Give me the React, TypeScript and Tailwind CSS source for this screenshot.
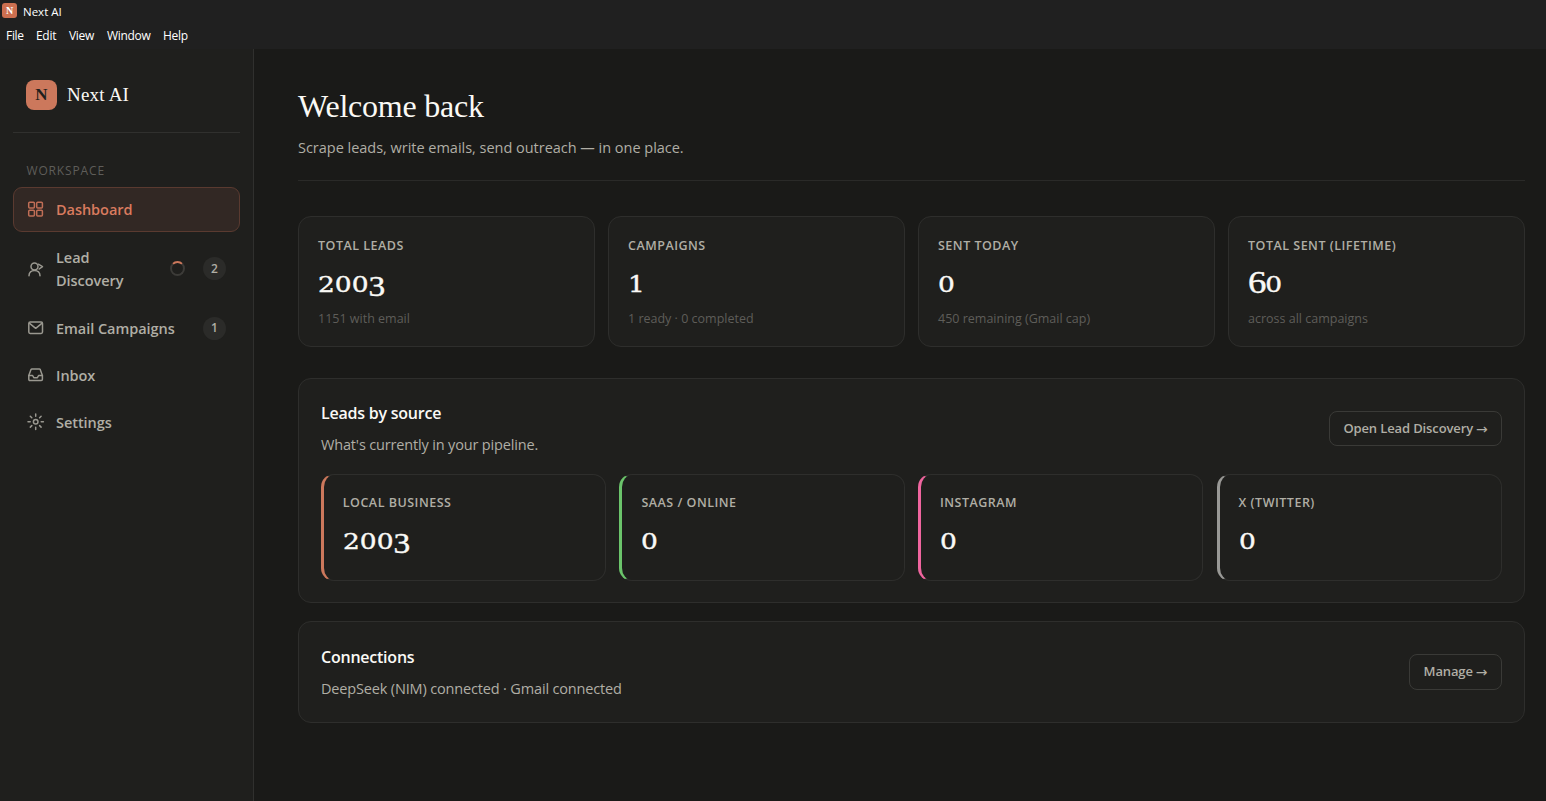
import React from 'react';

const SERIF = "font-['Liberation_Serif',serif]";

const menuItems = [
  { label: 'File', className: 'w-[30px]' },
  { label: 'Edit', className: 'w-[33px]' },
  { label: 'View', className: 'w-[38px]' },
  { label: 'Window', className: 'w-[56px]' },
  { label: 'Help', className: 'w-[30px]' },
];

const stats = [
  { label: 'TOTAL LEADS', value: '2003', hint: '1151 with email' },
  { label: 'CAMPAIGNS', value: '1', hint: '1 ready · 0 completed' },
  { label: 'SENT TODAY', value: '0', hint: '450 remaining (Gmail cap)' },
  { label: 'TOTAL SENT (LIFETIME)', value: '60', hint: 'across all campaigns' },
];

const sources = [
  { label: 'LOCAL BUSINESS', value: '2003', accent: 'border-l-[#cc785c]' },
  { label: 'SAAS / ONLINE', value: '0', accent: 'border-l-[#6bc46b]' },
  { label: 'INSTAGRAM', value: '0', accent: 'border-l-[#f0659f]' },
  { label: 'X (TWITTER)', value: '0', accent: 'border-l-[#999996]' },
];

function Icon({ children }: { children: React.ReactNode }) {
  return (
    <svg
      className="h-[18px] w-[18px] shrink-0 opacity-85"
      viewBox="0 0 18 18"
      fill="none"
      stroke="currentColor"
      strokeWidth="1.5"
      strokeLinecap="round"
      strokeLinejoin="round"
    >
      {children}
    </svg>
  );
}

function DashboardIcon() {
  return (
    <Icon>
      <rect x="1.7" y="1.2" width="5.7" height="5.7" rx="1" />
      <rect x="9.7" y="1.2" width="5.7" height="5.7" rx="1" />
      <rect x="1.7" y="9.2" width="5.7" height="5.7" rx="1" />
      <rect x="9.7" y="9.2" width="5.7" height="5.7" rx="1" />
    </Icon>
  );
}

function LeadIcon() {
  return (
    <Icon>
      <circle cx="7.5" cy="6.5" r="3.5" />
      <path d="M2 15.8c0-3.2 2.3-5.4 5.5-5.4s5.5 2.2 5.5 5.4" />
      <path d="M11.4 4.2l4.1 2.4-3.3 2.4" />
    </Icon>
  );
}

function MailIcon() {
  return (
    <Icon>
      <rect x="1.8" y="3" width="13.7" height="11.4" rx="1.4" />
      <path d="M2.6 4.4l6.1 4.9 6.1-4.9" />
    </Icon>
  );
}

function InboxIcon() {
  return (
    <Icon>
      <path d="M1.8 9.5L4 3.6c.2-.5.5-.7 1-.7h7.2c.5 0 .9.2 1 .7l2.2 5.9v3.8c0 .7-.4 1.1-1.1 1.1H2.9c-.7 0-1.1-.4-1.1-1.1z" />
      <path d="M1.8 9.5h3.8l1.2 2.2h3.6l1.2-2.2h3.8" />
    </Icon>
  );
}

function SettingsIcon() {
  return (
    <Icon>
      <circle cx="8.7" cy="8.7" r="2.3" />
      <path d="M8.7 1v2.2M8.7 14.2v2.2M1 8.7h2.2M14.2 8.7h2.2M3.3 3.3l1.5 1.5M12.6 12.6l1.5 1.5M3.3 14.1l1.5-1.5M12.6 4.8l1.5-1.5" />
    </Icon>
  );
}

function NavItem({
  icon,
  children,
  active,
  spinning,
  count,
  className = 'h-[45px]',
}: {
  icon: React.ReactNode;
  children: React.ReactNode;
  active?: boolean;
  spinning?: boolean;
  count?: number;
  className?: string;
}) {
  const tone = active
    ? 'border-[#5a3a30] bg-[#322824] text-[#d97b5f]'
    : 'border-transparent text-[#b0aea5]';
  return (
    <a className={`flex shrink-0 items-center rounded-[9px] border px-[13px] ${tone} ${className}`}>
      {icon}
      <span className="ml-[11px] flex-1 text-[14.5px] leading-[23px] font-semibold tracking-[-0.05px]">
        {children}
      </span>
      {spinning && (
        <span className="mr-[18px] h-[15px] w-[15px] rounded-full border-2 border-[#3c3b38] border-t-[#cc785c]" />
      )}
      {count !== undefined && (
        <span className="flex h-[23px] w-[23px] items-center justify-center rounded-full bg-[#2b2b29] text-xs font-semibold text-[#b0aea5]">
          {count}
        </span>
      )}
    </a>
  );
}

// Old-style figures: 0-2 sit at x-height, 6 and 8 ascend, the others descend
function digitClass(digit: string) {
  if ('68'.includes(digit)) {
    return "relative top-px font-['Liberation_Serif',serif] text-[32px] tracking-[-1px]";
  }
  if ('34579'.includes(digit)) {
    return "relative top-[4px] font-['Liberation_Serif',serif] text-[29px]";
  }
  return '';
}

function Figure({ value }: { value: string }) {
  return (
    <div className="h-[34px] origin-left scale-x-[1.15] font-['DejaVu_Serif',serif] text-[23px] leading-[34px] whitespace-nowrap text-[#faf9f5] [-webkit-text-stroke:0.4px_#faf9f5]">
      {value.split('').map((digit, i) => (
        <span key={i} className={`leading-[0] ${digitClass(digit)}`}>{digit}</span>
      ))}
    </div>
  );
}

function Label({ children }: { children: React.ReactNode }) {
  return (
    <div className="text-[12.5px] leading-[18px] font-semibold tracking-[0.5px] whitespace-nowrap text-[#b0aea5]">
      {children}
    </div>
  );
}

function PanelHeader({ title, text, action }: { title: string; text: string; action: React.ReactNode }) {
  return (
    <div className="flex items-center justify-between">
      <div>
        <h2 className="text-[16px] leading-[26px] font-semibold tracking-[-0.23px] text-[#faf9f5]">{title}</h2>
        <p className="mt-[7px] text-[14.5px] leading-[24px] tracking-[-0.16px] text-[#b0aea5]">{text}</p>
      </div>
      {action}
    </div>
  );
}

function OutlineButton({ children, className }: { children: React.ReactNode; className: string }) {
  return (
    <button
      className={`flex items-center justify-center gap-[3px] rounded-[8px] border border-[#3a3a37] pt-[1px] text-[13px] font-semibold tracking-[-0.12px] whitespace-nowrap text-[#b0aea5] ${className}`}
    >
      {children}
      <span className="font-['DejaVu_Sans',sans-serif] text-[14px] leading-[16px] font-normal">→</span>
    </button>
  );
}

function Sidebar() {
  return (
    <aside className="flex w-[254px] shrink-0 flex-col border-r border-[#30302e] bg-[#1f1f1d] px-[13px]">
      <div className="flex h-[84px] shrink-0 items-center border-b border-[#30302e] pt-[8px] pl-[13px]">
        <div className={`${SERIF} flex h-[30px] w-[31px] items-center justify-center rounded-[8px] bg-[#cc785c] text-[17px] font-bold text-[#1f1f1d]`}>
          N
        </div>
        <span className={`${SERIF} ml-[10px] pt-[2px] text-[19px] tracking-[0.2px] text-[#faf9f5]`}>Next AI</span>
      </div>
      <div className="mt-[29px] mb-[7px] pl-[13.5px] text-xs leading-[18px] tracking-[0.85px] text-[#5e5d59]">
        WORKSPACE
      </div>
      <nav className="flex flex-col gap-[2px]">
        <NavItem icon={<DashboardIcon />} active>Dashboard</NavItem>
        <NavItem icon={<LeadIcon />} spinning count={2} className="h-[69.6px]">
          Lead
          <br />
          Discovery
        </NavItem>
        <NavItem icon={<MailIcon />} count={1}>Email Campaigns</NavItem>
        <NavItem icon={<InboxIcon />}>Inbox</NavItem>
        <NavItem icon={<SettingsIcon />}>Settings</NavItem>
      </nav>
    </aside>
  );
}

export default function App() {
  return (
    <div className="flex h-[801px] w-[1546px] flex-col overflow-hidden bg-[#1a1a18] font-['Open_Sans',sans-serif]">
      {/* Window chrome */}
      <header className="h-[49px] shrink-0 bg-[#202020] text-white">
        <div className="flex h-[24px] items-center">
          <div className={`${SERIF} mb-[3px] ml-[2px] flex h-[15px] w-[15px] items-center justify-center rounded-[3px] bg-[#cc6f50] text-[10px] font-bold`}>
            N
          </div>
          <span className="ml-[6px] text-[11.5px]">Next AI</span>
        </div>
        <div className="flex h-[24px] items-center pl-[6px] text-[12px] tracking-[-0.3px]">
          {menuItems.map((item) => (
            <span key={item.label} className={item.className}>{item.label}</span>
          ))}
        </div>
      </header>

      <div className="flex min-h-0 flex-1">
        <Sidebar />

        <main className="min-w-0 flex-1 pr-[21px] pl-[44px]">
          <div className="h-[132px] border-b border-[#2a2a28] pt-[37px]">
            <h1 className={`${SERIF} text-[32px] leading-[40px] tracking-[-0.22px] text-[#faf9f5]`}>Welcome back</h1>
            <p className="mt-[10px] text-[14.5px] leading-[24px] tracking-[-0.02px] text-[#b0aea5]">
              Scrape leads, write emails, send outreach — in one place.
            </p>
          </div>

          <section className="mt-[35px] grid grid-cols-4 gap-[13px]">
            {stats.map((stat) => (
              <div key={stat.label} className="h-[131px] rounded-[13px] border border-[#2e2e2c] bg-[#1f1f1d] px-[19px] pt-[20px]">
                <Label>{stat.label}</Label>
                <div className="mt-[12px]">
                  <Figure value={stat.value} />
                </div>
                <div className="mt-[9px] text-[12.5px] leading-[18px] text-[#5e5d59]">{stat.hint}</div>
              </div>
            ))}
          </section>

          <section className="mt-[31px] h-[225px] rounded-[13px] border border-[#2e2e2c] bg-[#1f1f1d] px-[22px] pt-[21px]">
            <PanelHeader
              title="Leads by source"
              text="What's currently in your pipeline."
              action={<OutlineButton className="h-[35px] w-[173px]">Open Lead Discovery</OutlineButton>}
            />
            <div className="mt-[17px] -ml-[0.2px] grid grid-cols-4 gap-[13.2px]">
              {sources.map((source) => (
                <div
                  key={source.label}
                  className={`h-[107px] rounded-[13px] border border-l-[3px] border-[#2e2e2c] px-[19px] pt-[19px] ${source.accent}`}
                >
                  <Label>{source.label}</Label>
                  <div className="mt-[12px]">
                    <Figure value={source.value} />
                  </div>
                </div>
              ))}
            </div>
          </section>

          <section className="mt-[18px] h-[102px] rounded-[13px] border border-[#2e2e2c] bg-[#1f1f1d] px-[22px] pt-[22px]">
            <PanelHeader
              title="Connections"
              text="DeepSeek (NIM) connected · Gmail connected"
              action={<OutlineButton className="mb-[2px] h-[36px] w-[93px]">Manage</OutlineButton>}
            />
          </section>
        </main>
      </div>
    </div>
  );
}
